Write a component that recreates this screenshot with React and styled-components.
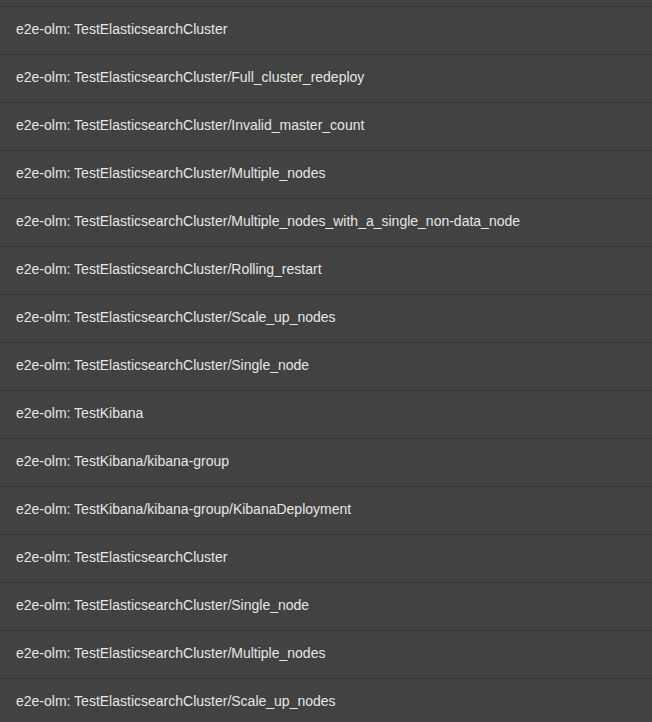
import React from "react";
import styled, { createGlobalStyle } from "styled-components";

const Global = createGlobalStyle`
  html, body { margin: 0; padding: 0; background: #424242; }
  body { font-family: "Liberation Sans", Arial, sans-serif; }
`;

const List = styled.div`
  background: #424242;
  padding-top: 6px;
  display: flex;
  flex-direction: column;
`;

const Row = styled.div`
  box-sizing: border-box;
  height: 48px;
  border-top: 1px solid #383838;
  display: flex;
  align-items: center;
  padding: 0 16px 4px;
  color: #e6e6e6;
  font-size: 14px;
  white-space: nowrap;
`;

const items = [
  "TestElasticsearchCluster",
  "TestElasticsearchCluster/Full_cluster_redeploy",
  "TestElasticsearchCluster/Invalid_master_count",
  "TestElasticsearchCluster/Multiple_nodes",
  "TestElasticsearchCluster/Multiple_nodes_with_a_single_non-data_node",
  "TestElasticsearchCluster/Rolling_restart",
  "TestElasticsearchCluster/Scale_up_nodes",
  "TestElasticsearchCluster/Single_node",
  "TestKibana",
  "TestKibana/kibana-group",
  "TestKibana/kibana-group/KibanaDeployment",
  "TestElasticsearchCluster",
  "TestElasticsearchCluster/Single_node",
  "TestElasticsearchCluster/Multiple_nodes",
  "TestElasticsearchCluster/Scale_up_nodes",
];

export default function App() {
  return (
    <>
      <Global />
      <List>
        {items.map((t, i) => (
          <Row key={i}>e2e-olm: {t}</Row>
        ))}
      </List>
    </>
  );
}
